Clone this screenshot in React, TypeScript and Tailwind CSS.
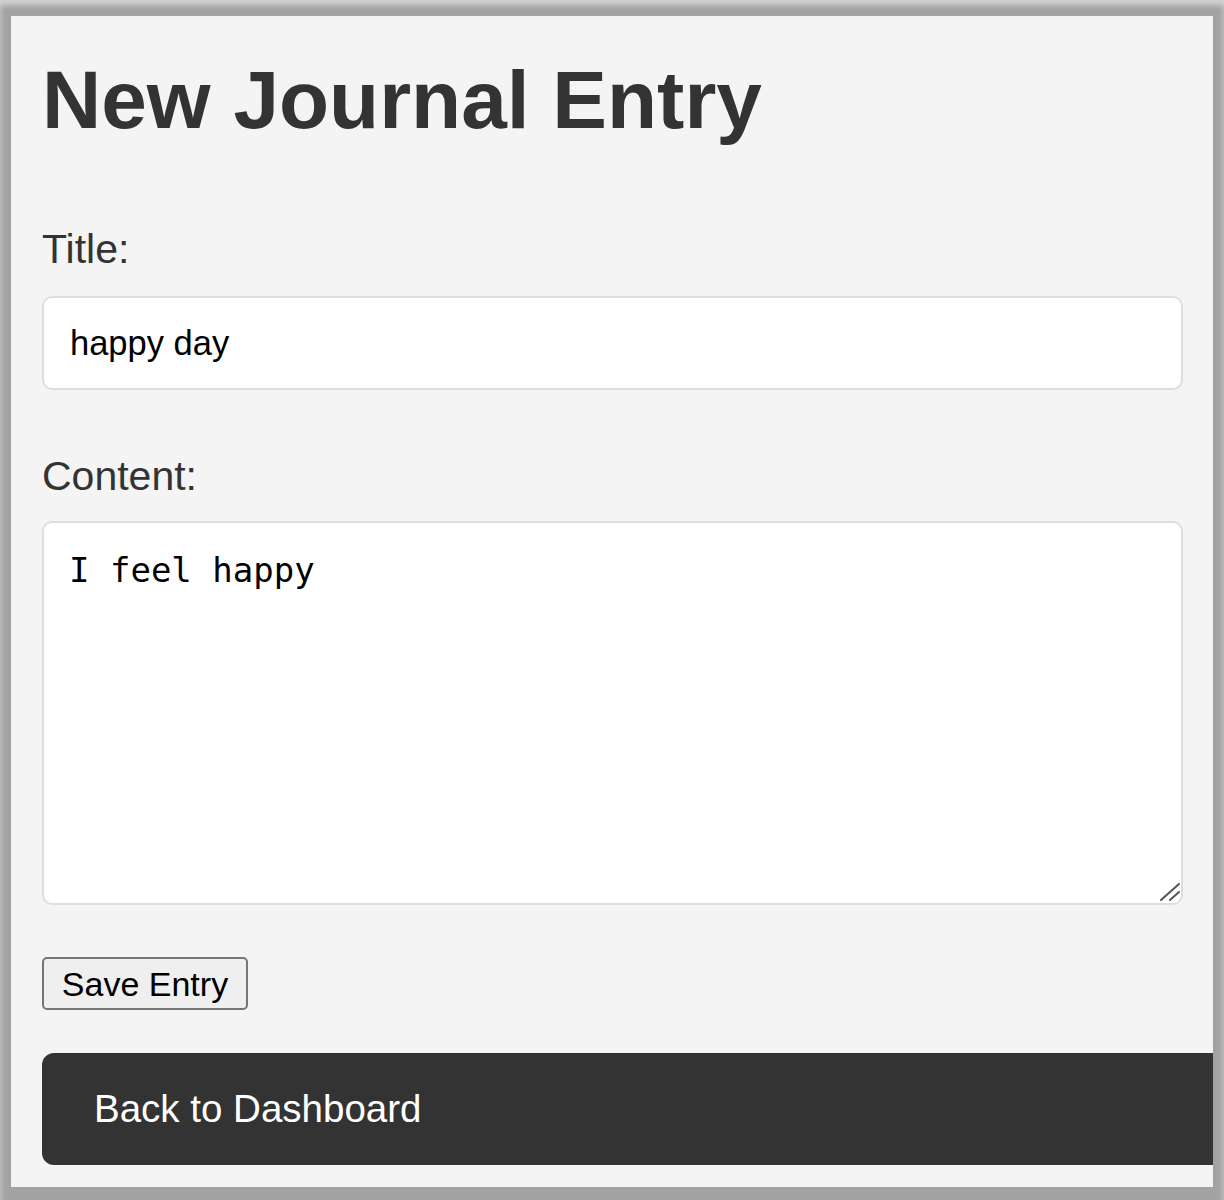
import { useState } from 'react'

export default function App() {
  const [title, setTitle] = useState('happy day')
  const [content, setContent] = useState('I feel happy')

  return (
    <div className="w-[1224px] h-[1200px] bg-[#a2a2a2] pl-[11px] pr-[11px] pt-[16px] pb-[13px] shadow-[inset_0_5px_6px_rgba(255,255,255,0.55)] font-['Liberation_Sans',Arial,sans-serif]">
      <div className="h-full bg-[#f4f4f4] overflow-hidden pl-[31px]">
        <h1 className="mt-[43px] text-[82px] leading-[82px] font-bold text-[#333]">New Journal Entry</h1>

        <form onSubmit={(e) => e.preventDefault()}>
          <label className="block mt-[88px] text-[41px] leading-[40px] text-[#333]">Title:</label>
          <input
            value={title}
            onChange={(e) => setTitle(e.target.value)}
            className="block mt-[27px] w-[1141px] h-[94px] bg-white border-2 border-[#dedede] rounded-[10px] pl-[26px] pr-[24px] text-[34.5px] text-black outline-none"
          />

          <label className="block mt-[66px] text-[41px] leading-[40px] text-[#333]">Content:</label>
          <div className="relative mt-[25px] w-[1141px] h-[384px]">
            <textarea
              value={content}
              onChange={(e) => setContent(e.target.value)}
              className="block w-full h-full bg-white border-2 border-[#dedede] rounded-[10px] pl-[25px] pr-[24px] pt-[22px] text-[34px] text-black font-['DejaVu_Sans_Mono',monospace] resize-none outline-none"
            />
            {/* resize grip */}
            <svg className="absolute right-[3px] bottom-[4px]" width="20" height="18" viewBox="0 0 20 18">
              <line x1="1" y1="17" x2="19" y2="1" stroke="#555" strokeWidth="2" strokeLinecap="round" />
              <line x1="10" y1="17" x2="19" y2="9" stroke="#555" strokeWidth="2" strokeLinecap="round" />
            </svg>
          </div>

          <button
            type="submit"
            className="block mt-[52px] w-[206px] h-[53px] bg-[#efefef] border-2 border-[#767676] rounded-[5px] text-[34px] leading-none text-black"
          >
            Save Entry
          </button>
        </form>

        <div className="mt-[43px] w-[1200px] h-[112px] bg-[#333] rounded-[12px] flex items-center pl-[52px]">
          <span className="text-white text-[38.5px] leading-none">Back to Dashboard</span>
        </div>
      </div>
    </div>
  )
}
